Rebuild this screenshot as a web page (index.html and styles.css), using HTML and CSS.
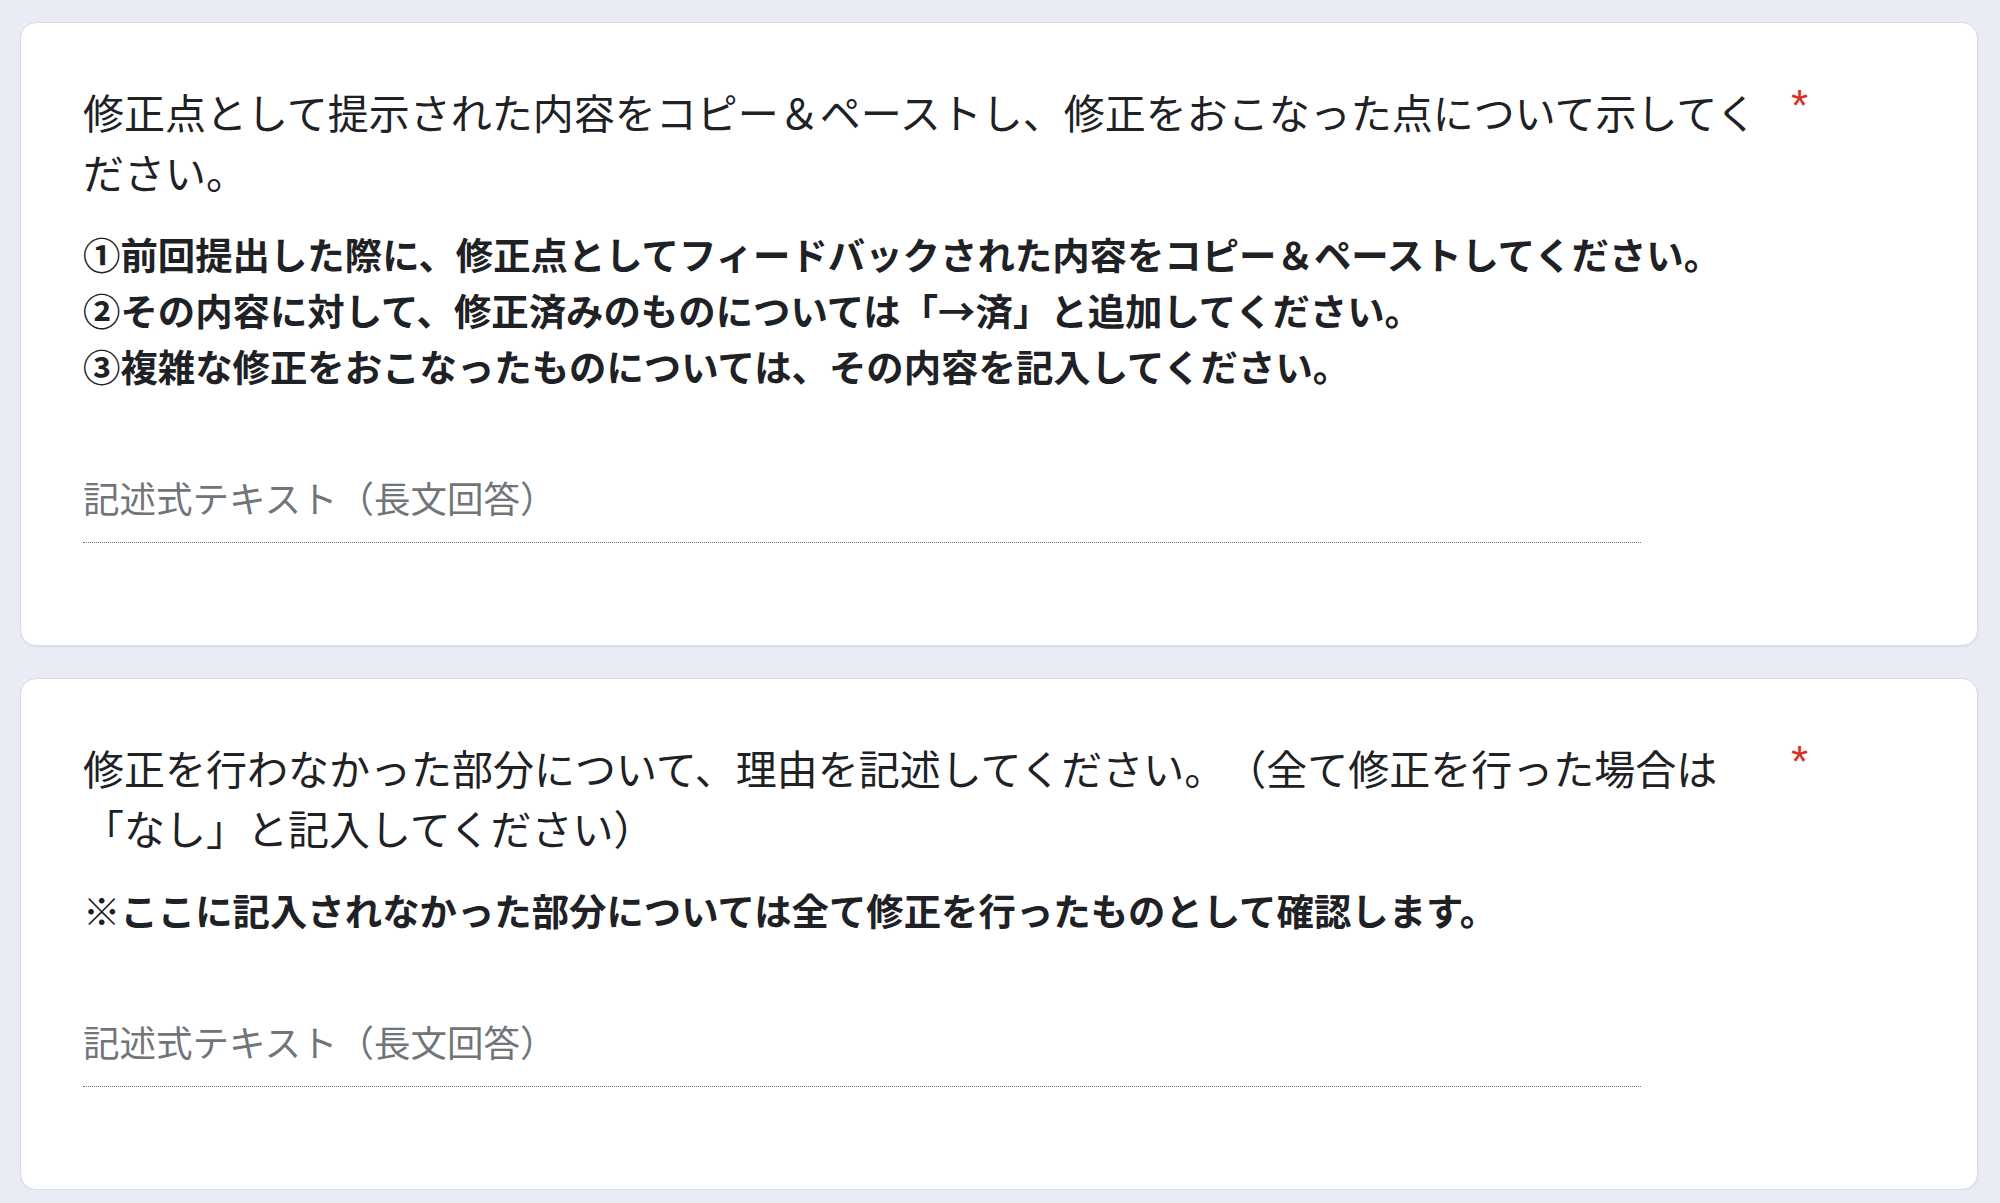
FILE: index.html
```html
<!DOCTYPE html>
<html lang="ja">
<head>
<meta charset="utf-8">
<title>Form</title>
<link rel="stylesheet" href="styles.css">
</head>
<body>
<main class="page">
  <section class="card">
    <div class="title-row">
      <div class="title">修正点として提示された内容をコピー＆ペーストし、修正をおこなった点について示してください。</div>
      <span class="req">*</span>
    </div>
    <div class="desc">①前回提出した際に、修正点としてフィードバックされた内容をコピー＆ペーストしてください。<br>②その内容に対して、修正済みのものについては「→済」と追加してください。<br>③複雑な修正をおこなったものについては、その内容を記入してください。</div>
    <div class="answer"><span class="placeholder">記述式テキスト（長文回答）</span></div>
  </section>
  <section class="card">
    <div class="title-row">
      <div class="title">修正を行わなかった部分について、理由を記述してください。（全て修正を行った場合は「なし」と記入してください）</div>
      <span class="req">*</span>
    </div>
    <div class="desc">※ここに記入されなかった部分については全て修正を行ったものとして確認します。</div>
    <div class="answer"><span class="placeholder">記述式テキスト（長文回答）</span></div>
  </section>
</main>
</body>
</html>
```
FILE: styles.css
```css
html, body {
  margin: 0;
  padding: 0;
}
body {
  background: #e9ecf5;
  font-family: "Noto Sans CJK JP", "Noto Sans", sans-serif;
  color: #202124;
  text-spacing-trim: space-all;
}
.page {
  display: flex;
  flex-direction: column;
  gap: 32px;
  padding: 22px 22px 0 20px;
}
.card {
  background: #ffffff;
  border: 1px solid #dadce0;
  border-radius: 16px;
  box-shadow: 0 1px 2px rgba(60, 64, 67, 0.08);
  padding: 59px 62px 102px 62px;
  display: flex;
  flex-direction: column;
}
.title-row {
  display: flex;
  align-items: flex-start;
}
.title {
  width: 1684px;
  font-size: 41px;
  line-height: 59.5px;
  font-weight: 400;
  letter-spacing: 0;
}
.req {
  margin-left: 24px;
  margin-top: 2px;
  color: #d93025;
  font-family: "Liberation Sans", sans-serif;
  font-size: 44px;
  line-height: 44px;
  font-weight: 400;
}
.desc {
  margin-top: 25px;
  font-size: 37.4px;
  line-height: 56px;
  font-weight: 700;
  color: #202124;
}
.answer {
  margin-top: 82px;
  width: 1558px;
  padding-bottom: 22px;
  border-bottom: 1px dotted #70757a;
  font-size: 36.5px;
  line-height: 44px;
}
.placeholder {
  color: #70757a;
}
```
